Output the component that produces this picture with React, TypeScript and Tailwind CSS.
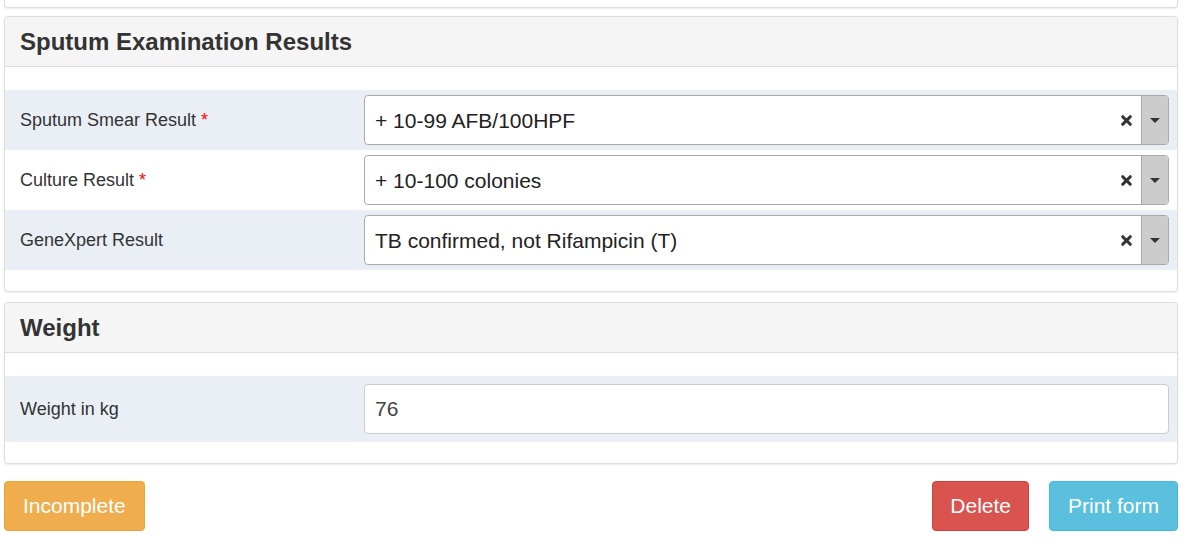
import { X } from 'lucide-react'

interface FieldRow {
  label: string
  required?: boolean
  value: string
  striped: boolean
}

const sputumRows: FieldRow[] = [
  { label: 'Sputum Smear Result', required: true, value: '+ 10-99 AFB/100HPF', striped: true },
  { label: 'Culture Result', required: true, value: '+ 10-100 colonies', striped: false },
  { label: 'GeneXpert Result', value: 'TB confirmed, not Rifampicin (T)', striped: true },
]

function SelectBox({ value }: { value: string }) {
  return (
    <div className="flex h-[50px] flex-1 items-center rounded border border-[#aaa] bg-white">
      <span className="flex-1 pt-[1px] pl-[10px] text-[21px] text-[#222]">{value}</span>
      <span className="mr-[7px] flex items-center text-[#333]">
        <X className="h-[15px] w-[15px]" strokeWidth={5} />
      </span>
      <span className="flex h-full w-[27px] items-center justify-center rounded-r border-l border-[#aaa] bg-[#ccc]">
        <span className="h-0 w-0 border-x-[5px] border-t-[5px] border-x-transparent border-t-[#333]" />
      </span>
    </div>
  )
}

function Panel({ title, children }: { title: string; children: React.ReactNode }) {
  return (
    <div className="rounded border border-[#ddd] bg-white shadow-[0_1px_2px_rgba(0,0,0,0.08)]">
      <div className="flex h-[50px] items-center rounded-t border-b border-[#ddd] bg-[#f5f5f5] px-[15px]">
        <h3 className="text-[24px] font-bold text-[#333]">{title}</h3>
      </div>
      <div className="pt-[23px] pb-[21px]">{children}</div>
    </div>
  )
}

export default function App() {
  return (
    <div className="min-h-screen bg-white pl-[4px] pr-[12px] font-['Liberation_Sans',Arial,sans-serif] text-[#333]">
      {/* tail of the previous panel */}
      <div className="h-[8px] rounded-b border-x border-b border-[#ddd] shadow-[0_1px_2px_rgba(0,0,0,0.08)]" />

      <div className="mt-[8px]">
        <Panel title="Sputum Examination Results">
          {sputumRows.map((row) => (
            <div
              key={row.label}
              className={`flex h-[60px] items-center pr-[8px] ${row.striped ? 'bg-[#eaeff6]' : 'bg-white'}`}
            >
              <div className="w-[359px] pl-[15px] text-[18px]">
                {row.label}
                {row.required && <span className="ml-[5px] text-[#f00]">*</span>}
              </div>
              <SelectBox value={row.value} />
            </div>
          ))}
        </Panel>
      </div>

      <div className="mt-[10px]">
        <Panel title="Weight">
          <div className="flex h-[66px] items-center bg-[#eaeff6] pr-[8px]">
            <div className="w-[359px] pl-[15px] text-[18px]">Weight in kg</div>
            <div className="flex h-[50px] flex-1 items-center rounded border border-[#ccc] bg-white pl-[10px] text-[21px] text-[#444]">
              76
            </div>
          </div>
        </Panel>
      </div>

      <div className="mt-[17px] flex items-center">
        <button className="h-[50px] rounded border border-[#eea236] bg-[#f0ad4e] px-[18px] text-[21px] text-white">
          Incomplete
        </button>
        <div className="flex-1" />
        <button className="h-[50px] rounded border border-[#d43f3a] bg-[#d9534f] px-[17px] text-[21px] text-white">
          Delete
        </button>
        <button className="ml-[20px] h-[50px] rounded border border-[#46b8da] bg-[#5bc0de] px-[18px] text-[21px] text-white">
          Print form
        </button>
      </div>
    </div>
  )
}
